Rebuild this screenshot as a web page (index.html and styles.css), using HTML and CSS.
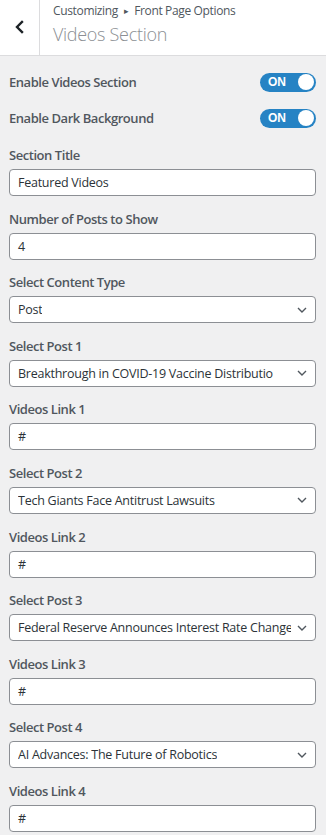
FILE: index.html
```html
<!DOCTYPE html>
<html>
<head>
<meta charset="utf-8">
<link rel="stylesheet" href="styles.css">
</head>
<body>
<div class="header">
  <div class="back">
    <svg width="10" height="14" viewBox="0 0 10 14"><polyline points="7,2 2,7 7,12" fill="none" stroke="#1d2327" stroke-width="2.4" stroke-linecap="square"/></svg>
  </div>
  <div class="titles">
    <div class="crumb">Customizing <span class="tri">▸</span> Front Page Options</div>
    <div class="title">Videos Section</div>
  </div>
</div>
<div class="panel">
  <div class="toggle-row">
    <span class="label">Enable Videos Section</span>
    <span class="switch"><span class="on">ON</span><span class="knob"></span></span>
  </div>
  <div class="toggle-row">
    <span class="label">Enable Dark Background</span>
    <span class="switch"><span class="on">ON</span><span class="knob"></span></span>
  </div>

  <div class="control">
    <div class="label">Section Title</div>
    <div class="field">Featured Videos</div>
  </div>
  <div class="control">
    <div class="label">Number of Posts to Show</div>
    <div class="field">4</div>
  </div>
  <div class="control">
    <div class="label">Select Content Type</div>
    <div class="field select"><span class="val">Post</span><svg class="chev" width="10" height="6" viewBox="0 0 10 6"><polyline points="1,1 5,5 9,1" fill="none" stroke="#50575e" stroke-width="1.4"/></svg></div>
  </div>
  <div class="control">
    <div class="label">Select Post 1</div>
    <div class="field select"><span class="val">Breakthrough in COVID-19 Vaccine Distributio</span><svg class="chev" width="10" height="6" viewBox="0 0 10 6"><polyline points="1,1 5,5 9,1" fill="none" stroke="#50575e" stroke-width="1.4"/></svg></div>
  </div>
  <div class="control">
    <div class="label">Videos Link 1</div>
    <div class="field">#</div>
  </div>
  <div class="control">
    <div class="label">Select Post 2</div>
    <div class="field select"><span class="val">Tech Giants Face Antitrust Lawsuits</span><svg class="chev" width="10" height="6" viewBox="0 0 10 6"><polyline points="1,1 5,5 9,1" fill="none" stroke="#50575e" stroke-width="1.4"/></svg></div>
  </div>
  <div class="control">
    <div class="label">Videos Link 2</div>
    <div class="field">#</div>
  </div>
  <div class="control">
    <div class="label">Select Post 3</div>
    <div class="field select"><span class="val">Federal Reserve Announces Interest Rate Change</span><svg class="chev" width="10" height="6" viewBox="0 0 10 6"><polyline points="1,1 5,5 9,1" fill="none" stroke="#50575e" stroke-width="1.4"/></svg></div>
  </div>
  <div class="control">
    <div class="label">Videos Link 3</div>
    <div class="field">#</div>
  </div>
  <div class="control">
    <div class="label">Select Post 4</div>
    <div class="field select"><span class="val">AI Advances: The Future of Robotics</span><svg class="chev" width="10" height="6" viewBox="0 0 10 6"><polyline points="1,1 5,5 9,1" fill="none" stroke="#50575e" stroke-width="1.4"/></svg></div>
  </div>
  <div class="control">
    <div class="label">Videos Link 4</div>
    <div class="field">#</div>
  </div>
</div>
</body>
</html>
```
FILE: styles.css
```css
html, body {
  margin: 0;
  padding: 0;
  background: #f0f0f1;
  font-family: "Open Sans", "Noto Sans", sans-serif;
  color: #50575e;
  overflow: hidden;
}
.header {
  display: flex;
  height: 55px;
  background: #fff;
  border-bottom: 1px solid #dcdcde;
}
.back {
  width: 40px;
  border-right: 1px solid #dcdcde;
  display: flex;
  align-items: center;
  justify-content: center;
  padding-bottom: 1px;
  box-sizing: border-box;
}
.titles {
  padding: 1px 0 0 13px;
}
.crumb {
  font-size: 12px;
  line-height: 20px;
  letter-spacing: -0.35px;
  color: #50575e;
  white-space: nowrap;
}
.tri {
  font-size: 9px;
  padding: 0 3px;
  vertical-align: 1px;
}
.title {
  font-size: 18px;
  font-weight: 300;
  line-height: 26px;
  letter-spacing: -0.3px;
  color: #8c8f94;
}
.panel {
  padding: 8px 10px 0 9px;
}
.toggle-row {
  display: flex;
  align-items: center;
  justify-content: space-between;
  height: 36px;
}
.label {
  font-size: 13px;
  font-weight: 600;
  line-height: 20px;
  letter-spacing: -0.45px;
  color: #50575e;
  white-space: nowrap;
}
.switch {
  width: 56px;
  height: 19px;
  border-radius: 10px;
  background: #2683c4;
  display: flex;
  align-items: center;
  justify-content: space-between;
  box-sizing: border-box;
  padding: 0 2px 0 8px;
}
.on {
  color: #fff;
  font-family: "Liberation Sans", Arial, sans-serif;
  font-weight: 700;
  font-size: 12px;
  line-height: 19px;
}
.knob {
  width: 16px;
  height: 16px;
  border-radius: 50%;
  background: #fff;
}
.toggle-row + .control {
  margin-top: 9px;
}
.control {
  margin-bottom: 12.6px;
}
.control .label {
  margin-bottom: 4px;
}
.field {
  height: 27px;
  box-sizing: border-box;
  border: 1px solid #8c8f94;
  border-radius: 4px;
  background: #fff;
  padding: 0 8px;
  font-size: 12.5px;
  line-height: 25px;
  letter-spacing: -0.25px;
  color: #2c3338;
  white-space: nowrap;
  overflow: hidden;
}
.select {
  display: flex;
  align-items: center;
  justify-content: space-between;
  padding-right: 8px;
}
.val {
  overflow: hidden;
}
.chev {
  flex: none;
  margin-left: 6px;
}
```
